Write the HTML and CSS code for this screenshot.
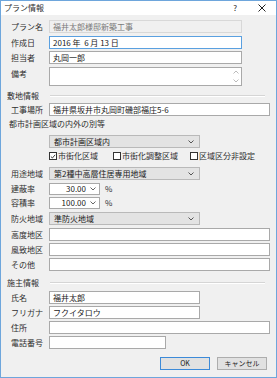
FILE: index.html
```html
<!DOCTYPE html>
<html lang="ja">
<head>
  <meta charset="UTF-8">
  <title>プラン情報</title>
  <link rel="stylesheet" href="styles.css">
</head>
<body>
  <div class="window">
    <div class="titlebar">
      <span class="title">プラン情報</span>
      <span class="help">?</span>
      <svg class="close" width="8" height="8" viewBox="0 0 8 8">
        <path d="M0.5 0.5 L7.5 7.5 M7.5 0.5 L0.5 7.5" stroke="#222" stroke-width="1"/>
      </svg>
    </div>

    <div class="content">
      <!-- プラン基本情報 -->
      <div class="row first">
        <span class="label">プラン名</span>
        <div class="field short disabled">福井太郎様邸新築工事</div>
      </div>
      <div class="row gap3">
        <span class="label">作成日</span>
        <div class="field short focused">2016 年&nbsp;&nbsp;6 月 13 日</div>
      </div>
      <div class="row">
        <span class="label">担当者</span>
        <div class="field short">丸岡一郎</div>
      </div>
      <div class="row gap3 memo">
        <span class="label">備考</span>
        <div class="field short textarea">
          <div class="scroll">
            <svg width="6" height="4" viewBox="0 0 6 4"><path d="M0.5 3.5 L3 1 L5.5 3.5" fill="none" stroke="#bbb"/></svg>
            <svg width="6" height="4" viewBox="0 0 6 4"><path d="M0.5 0.5 L3 3 L5.5 0.5" fill="none" stroke="#bbb"/></svg>
          </div>
        </div>
      </div>

      <!-- 敷地情報 -->
      <div class="section-head site-head">
        <span>敷地情報</span>
        <div class="rule"></div>
      </div>
      <div class="row">
        <span class="label">工事場所</span>
        <div class="field wide">福井県坂井市丸岡町磯部福庄5-6</div>
      </div>
      <div class="sub-head">都市計画区域の内外の別等</div>
      <div class="row gap6">
        <span class="label"></span>
        <div class="select">都市計画区域内<svg class="chev" width="6" height="4" viewBox="0 0 6 4"><path d="M0.5 0.5 L3 3 L5.5 0.5" fill="none" stroke="#555"/></svg></div>
      </div>
      <div class="checks">
        <label class="check"><span class="box checked"><svg width="7" height="7" viewBox="0 0 7 7"><path d="M1 3.5 L2.8 5.3 L6 1.5" fill="none" stroke="#222" stroke-width="1"/></svg></span>市街化区域</label>
        <label class="check c2"><span class="box"></span>市街化調整区域</label>
        <label class="check c3"><span class="box"></span>区域区分非設定</label>
      </div>
      <div class="row gap6">
        <span class="label">用途地域</span>
        <div class="select">第2種中高層住居専用地域<svg class="chev" width="6" height="4" viewBox="0 0 6 4"><path d="M0.5 0.5 L3 3 L5.5 0.5" fill="none" stroke="#555"/></svg></div>
      </div>
      <div class="row gap3 spin-row">
        <span class="label">建蔽率</span>
        <div class="spin"><span>30.00</span><svg width="6" height="4" viewBox="0 0 6 4"><path d="M0.5 0.5 L3 3 L5.5 0.5" fill="none" stroke="#666"/></svg></div>
        <span class="unit">%</span>
      </div>
      <div class="row spin-row">
        <span class="label">容積率</span>
        <div class="spin"><span>100.00</span><svg width="6" height="4" viewBox="0 0 6 4"><path d="M0.5 0.5 L3 3 L5.5 0.5" fill="none" stroke="#666"/></svg></div>
        <span class="unit">%</span>
      </div>
      <div class="row gap3">
        <span class="label">防火地域</span>
        <div class="select">準防火地域<svg class="chev" width="6" height="4" viewBox="0 0 6 4"><path d="M0.5 0.5 L3 3 L5.5 0.5" fill="none" stroke="#555"/></svg></div>
      </div>
      <div class="row gap3">
        <span class="label">高度地区</span>
        <div class="field wide"></div>
      </div>
      <div class="row">
        <span class="label">風致地区</span>
        <div class="field wide"></div>
      </div>
      <div class="row">
        <span class="label">その他</span>
        <div class="field wide"></div>
      </div>

      <!-- 施主情報 -->
      <div class="section-head owner-head">
        <span>施主情報</span>
        <div class="rule"></div>
      </div>
      <div class="row gap3">
        <span class="label">氏名</span>
        <div class="field mid">福井太郎</div>
      </div>
      <div class="row">
        <span class="label">フリガナ</span>
        <div class="field mid">フクイタロウ</div>
      </div>
      <div class="row">
        <span class="label">住所</span>
        <div class="field wide"></div>
      </div>
      <div class="row">
        <span class="label">電話番号</span>
        <div class="field tel"></div>
      </div>

      <div class="buttons">
        <button class="btn default">OK</button>
        <button class="btn">キャンセル</button>
      </div>
    </div>
  </div>
</body>
</html>
```

FILE: styles.css
```css
* {
  box-sizing: border-box;
  margin: 0;
  padding: 0;
  font-family: 'Noto Sans CJK JP', 'Noto Sans', sans-serif;
}

body {
  background: #ffffff;
}

.window {
  width: 277px;
  height: 378px;
  border: 1px solid #6ea6dc;
  background: #f0f0f0;
  display: flex;
  flex-direction: column;
  font-size: 8px;
  color: #2e2e2e;
}

.titlebar {
  height: 14px;
  background: #ffffff;
  display: flex;
  align-items: center;
  padding-left: 3px;
  flex-shrink: 0;
}

.title {
  flex: 1;
  font-size: 8px;
  line-height: 10px;
}

.help {
  font-size: 8px;
  line-height: 10px;
  margin-right: 21px;
  color: #222;
}

.close {
  margin-right: 10px;
}

.content {
  display: flex;
  flex-direction: column;
  padding-left: 10px;
}

.row {
  display: flex;
  align-items: center;
  height: 13px;
  margin-top: 2px;
}

.row.first { margin-top: 5px; }
.row.gap3 { margin-top: 3px; }
.row.gap6 { margin-top: 6px; }

.label {
  width: 38px;
  flex-shrink: 0;
  line-height: 10px;
  white-space: nowrap;
}

.field {
  height: 13px;
  background: #ffffff;
  border: 1px solid #a9a9a9;
  line-height: 11px;
  padding-left: 3px;
  white-space: nowrap;
  overflow: hidden;
  color: #1a1a1a;
}

.field.short { width: 193px; }
.field.wide { width: 221px; }
.field.mid { width: 151px; }
.field.tel { width: 117px; }

.field.disabled {
  background: #f0f0f0;
  border-color: #d8d8d8;
  color: #7a7a7a;
}

.field.focused {
  border-color: #5aa0e0;
}

.memo {
  height: 19px;
  align-items: flex-start;
}

.memo .label {
  margin-top: 2px;
}

.textarea {
  height: 19px;
  display: flex;
  justify-content: flex-end;
  padding-right: 2px;
}

.scroll {
  display: flex;
  flex-direction: column;
  justify-content: space-between;
  padding: 2px 0;
}

.section-head {
  display: flex;
  align-items: center;
  height: 10px;
  margin-left: -4px;
  line-height: 10px;
}

.site-head { margin-top: 5px; }
.owner-head { margin-top: 7px; }

.section-head span {
  width: 43px;
  flex-shrink: 0;
}

.rule {
  width: 215px;
  border-top: 1px solid #d5d5d5;
  border-bottom: 1px solid #ffffff;
}

.sub-head {
  margin-top: 3px;
  margin-left: -2px;
  height: 10px;
  line-height: 10px;
}

.select {
  width: 151px;
  height: 13px;
  background: #e3e3e3;
  border: 1px solid #b9b9b9;
  line-height: 11px;
  padding-left: 4px;
  display: flex;
  align-items: center;
  justify-content: space-between;
  padding-right: 5px;
  white-space: nowrap;
  color: #1a1a1a;
}

.checks {
  display: flex;
  align-items: center;
  height: 10px;
  margin-top: 3px;
  padding-left: 38px;
  line-height: 10px;
}

.check {
  display: flex;
  align-items: center;
  gap: 1px;
  white-space: nowrap;
}

.check.c2 { margin-left: 15px; }
.check.c3 { margin-left: 12px; }

.box {
  width: 8px;
  height: 8px;
  border: 1px solid #333;
  background: #fff;
  display: flex;
  align-items: center;
  justify-content: center;
}

.spin-row { height: 12px; }

.spin {
  width: 51px;
  height: 12px;
  background: #ffffff;
  border: 1px solid #a9a9a9;
  display: flex;
  align-items: center;
  justify-content: flex-end;
  gap: 4px;
  padding-right: 3px;
  line-height: 10px;
  color: #1a1a1a;
}

.unit {
  margin-left: 5px;
  line-height: 10px;
}

.buttons {
  display: flex;
  justify-content: flex-end;
  gap: 7px;
  margin-top: 8px;
  padding-right: 9px;
}

.btn {
  width: 50px;
  height: 13px;
  background: #e1e1e1;
  border: 1px solid #adadad;
  font-size: 7px;
  line-height: 11px;
  color: #1a1a1a;
}

.btn.default {
  border-color: #3c8ad8;
}
```
